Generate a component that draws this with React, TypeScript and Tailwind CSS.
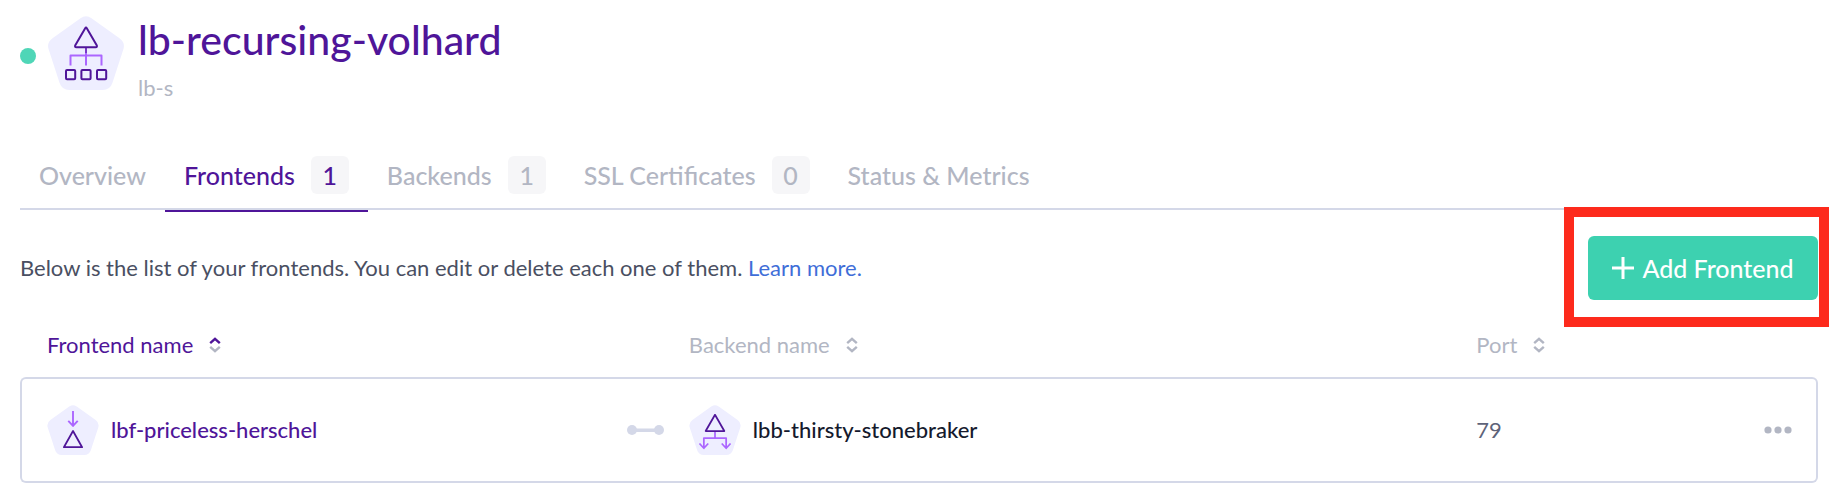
import type { ReactNode } from "react";

const PENTAGON =
  "M32.5 2.2 Q38 -1.6 43.5 2.2 L71.5 22.2 Q77.6 26.6 75.3 33.6 L64.4 67 Q62 74 54.6 74 L21.4 74 Q14 74 11.6 67 L.7 33.6 Q-1.6 26.6 4.5 22.2 Z";

function LoadBalancerIcon() {
  return (
    <svg className="h-[74px] w-[76px] shrink-0" viewBox="0 0 76 74" fill="none" strokeLinejoin="round" aria-hidden="true">
      <path d={PENTAGON} fill="#eeeeff" />
      <path d="M22.5 49.5V39.5H53.5V49.5M38 33V49.5" stroke="#ab66ff" strokeWidth="2" />
      <path d="M38 31V37" stroke="#7a38c8" strokeWidth="2" />
      <path d="M37.2 12.2 27.3 29.3Q26.4 31.2 28.4 31.2H47.6Q49.6 31.2 48.7 29.3L38.8 12.2Q38 10.9 37.2 12.2Z" stroke="#4f1599" strokeWidth="2" />
      <g stroke="#4f1599" strokeWidth="2">
        <rect x="18" y="54" width="9.2" height="9.2" rx="1" />
        <rect x="33.4" y="54" width="9.2" height="9.2" rx="1" />
        <rect x="49" y="54" width="9.2" height="9.2" rx="1" />
      </g>
    </svg>
  );
}

function FrontendIcon() {
  return (
    <svg className="h-[50px] w-[52px] shrink-0" viewBox="0 0 76 74" fill="none" strokeLinejoin="round" aria-hidden="true">
      <path d={PENTAGON} fill="#eeeeff" />
      <path d="M38 9V30M31 23.5 38 31 45 23.5" stroke="#ab66ff" strokeWidth="2.8" />
      <path d="M38 38.5 24.5 62.5H51.5Z" stroke="#4f1599" strokeWidth="2.6" />
    </svg>
  );
}

function BackendIcon() {
  return (
    <svg className="h-[50px] w-[52px] shrink-0" viewBox="0 0 76 74" fill="none" strokeLinejoin="round" aria-hidden="true">
      <path d={PENTAGON} fill="#eeeeff" />
      <path d="M38 39V49M21.5 64V49H54.5V64M15 57 21.5 64 28 57M48 57 54.5 64 61 57" stroke="#ab66ff" strokeWidth="2.6" />
      <path d="M38 14.5 24.2 38.5H51.8Z" stroke="#4f1599" strokeWidth="2.6" />
    </svg>
  );
}

function SortIcon({ active = false }: { active?: boolean }) {
  return (
    <svg className="h-4 w-3" viewBox="0 0 12 16" fill="none" strokeWidth="2.4" aria-hidden="true">
      <path d="M1.2 6.2 6 1.8 10.8 6.2" stroke={active ? "#4f1599" : "#b2b6c3"} />
      <path d="M1.2 9.8 6 14.2 10.8 9.8" stroke="#b2b6c3" />
    </svg>
  );
}

function Tab({ label, count, active = false }: { label: string; count?: number; active?: boolean }) {
  return (
    <a
      href="#"
      aria-current={active ? "page" : undefined}
      className={
        active
          ? "-mb-1 flex items-center gap-4 border-b-2 border-[#4f1599] px-[19px] pb-4 font-medium text-[#4f1599]"
          : "-mb-1 flex items-center gap-4 border-b-2 border-transparent px-[19px] pb-4 font-medium text-[#b2b6c3]"
      }
    >
      <span>{label}</span>
      {count !== undefined && (
        <span className="flex h-[38px] w-[38px] items-center justify-center rounded-md bg-[#f6f6f8]">{count}</span>
      )}
    </a>
  );
}

function SortHeader({ children, active = false }: { children: ReactNode; active?: boolean }) {
  return (
    <button
      type="button"
      className={active ? "flex items-center gap-4 text-[#4f1599]" : "flex items-center gap-4 text-[#b2b6c3]"}
    >
      {children}
      <SortIcon active={active} />
    </button>
  );
}

export default function App() {
  return (
    <main className="bg-white pr-[14px] pl-5 font-['Lato','Noto_Sans',sans-serif] text-[22px] leading-8 text-[#4a4f62]">
      <header className="flex items-start gap-3 pt-4">
        <span className="mt-8 size-4 shrink-0 rounded-full bg-[#4fd6b7]" role="img" aria-label="Ready" />
        <LoadBalancerIcon />
        <div className="ml-0.5">
          <h1 className="text-[41px] leading-[48px] font-medium text-[#4f1599]">lb-recursing-volhard</h1>
          <p className="mt-2 text-[#b2b6c3]">lb-s</p>
        </div>
      </header>

      <nav className="mt-[52px] flex h-[54px] border-b-2 border-[#d4d8e8] text-[25px]" aria-label="Load balancer">
        <Tab label="Overview" />
        <Tab label="Frontends" count={1} active />
        <Tab label="Backends" count={1} />
        <Tab label="SSL Certificates" count={0} />
        <Tab label="Status & Metrics" />
      </nav>

      <div className="mt-[26px] flex items-center justify-between">
        <p>
          Below is the list of your frontends. You can edit or delete each one of them.{" "}
          <a href="#" className="text-[#3f6ed8]">Learn more.</a>
        </p>
        <div className="relative">
          <button type="button" className="flex h-16 w-[230px] items-center justify-center gap-2 rounded-md bg-[#3dd1b0] text-[25px] font-medium text-white">
            <svg className="size-[22px]" viewBox="0 0 22 22" stroke="currentColor" strokeWidth="3" aria-hidden="true">
              <path d="M11 0V22M0 11H22" />
            </svg>
            Add Frontend
          </button>
          <div className="pointer-events-none absolute -top-[29px] -right-[11px] -bottom-[27px] -left-6 border-10 border-[#fd2a1c]" />
        </div>
      </div>

      <table className="mt-[29px] w-full table-fixed border-separate border-spacing-0 text-left">
        <thead>
          <tr>
            <th scope="col" className="w-[33%] pb-4 pl-[27px] font-normal"><SortHeader active>Frontend name</SortHeader></th>
            <td className="w-[4.2%]" />
            <th scope="col" className="w-[43.8%] pb-4 font-normal"><SortHeader>Backend name</SortHeader></th>
            <th scope="col" className="w-[13%] pb-4 font-normal"><SortHeader>Port</SortHeader></th>
            <td />
          </tr>
        </thead>
        <tbody>
          <tr>
            <td className="h-[106px] rounded-l-md border-y-2 border-l-2 border-[#d4d8e8] pl-[25px]">
              <a href="#" className="flex items-center gap-3 font-medium text-[#4f1599]">
                <FrontendIcon />
                lbf-priceless-herschel
              </a>
            </td>
            <td className="border-y-2 border-[#d4d8e8]">
              <svg className="ml-3.5 h-2.5 w-[37px]" viewBox="0 0 37 10" fill="#d4d8e8" aria-hidden="true">
                <circle cx="5" cy="5" r="5" />
                <circle cx="32" cy="5" r="5" />
                <rect x="8" y="3.5" width="21" height="3.5" />
              </svg>
            </td>
            <td className="border-y-2 border-[#d4d8e8]">
              <a href="#" className="flex items-center gap-3 font-medium text-[#151a2d]">
                <BackendIcon />
                lbb-thirsty-stonebraker
              </a>
            </td>
            <td className="border-y-2 border-[#d4d8e8] text-[#5e6379]">79</td>
            <td className="rounded-r-md border-y-2 border-r-2 border-[#d4d8e8] pr-6">
              <button type="button" aria-label="More actions" className="ml-auto block">
                <svg className="h-2 w-7" viewBox="0 0 28 8" fill="#b2b6c3" aria-hidden="true">
                  <circle cx="4" cy="4" r="3.6" />
                  <circle cx="14" cy="4" r="3.6" />
                  <circle cx="24" cy="4" r="3.6" />
                </svg>
              </button>
            </td>
          </tr>
        </tbody>
      </table>
    </main>
  );
}
